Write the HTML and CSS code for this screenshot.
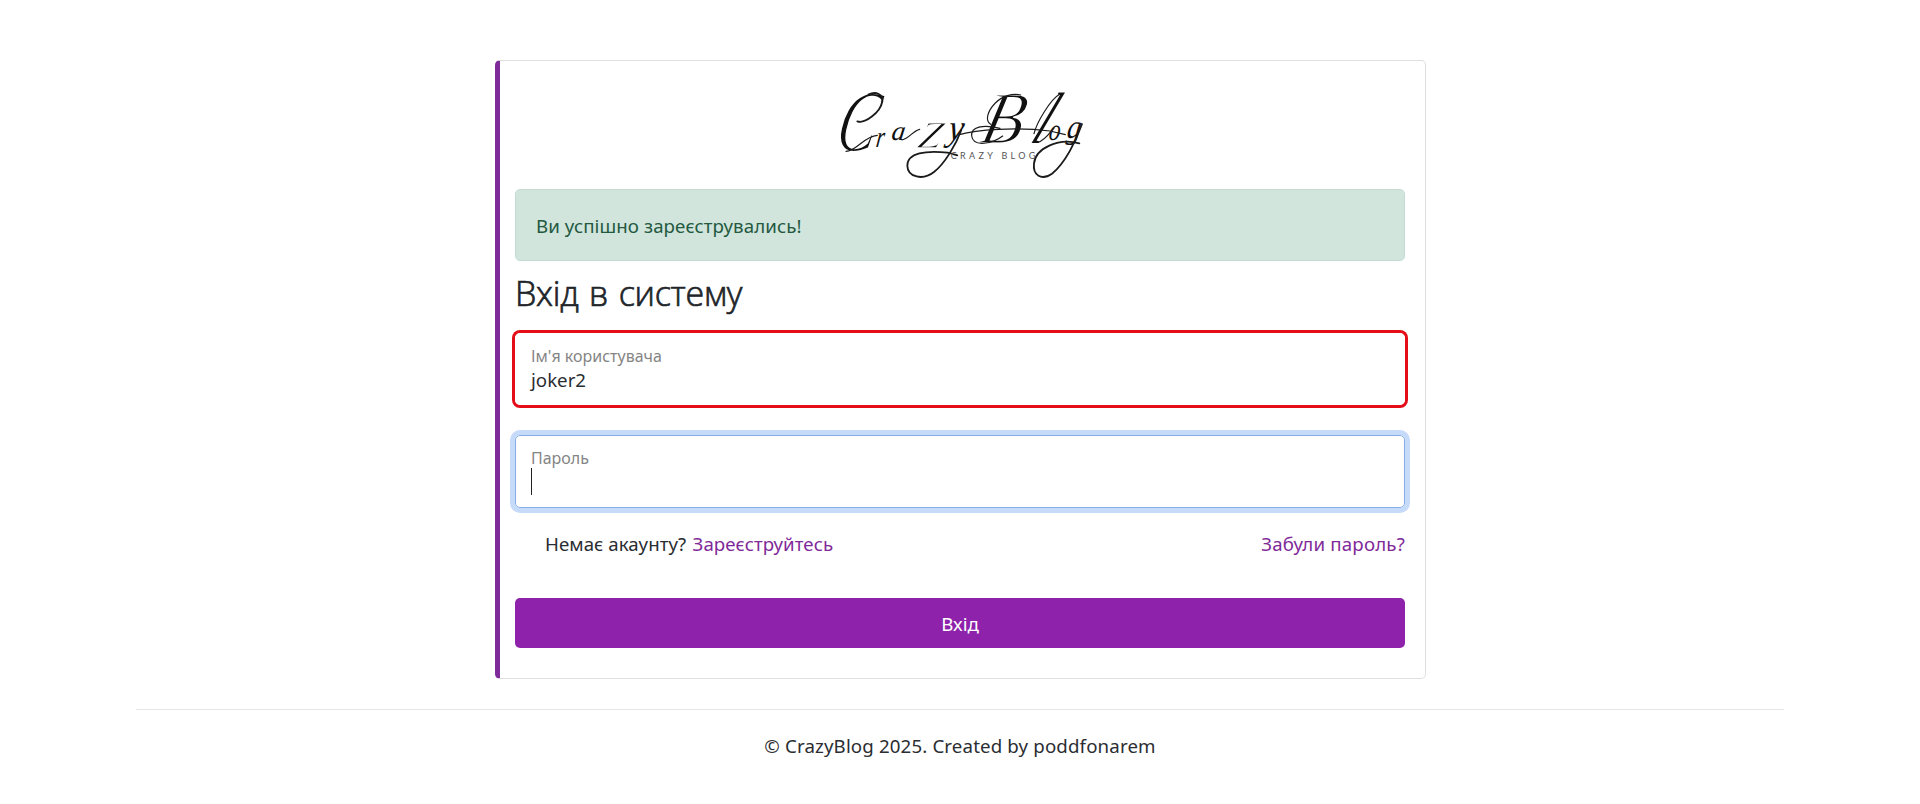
FILE: index.html
```html
<!DOCTYPE html>
<html lang="uk">
<head>
<meta charset="utf-8">
<title>CrazyBlog</title>
<link rel="stylesheet" href="styles.css">
</head>
<body>
<main class="card">
  <svg class="logo" viewBox="0 0 840 327" role="img" aria-label="CrazyBlog">
    <g class="script">
      <text class="thin" transform="translate(40 212) skewX(-12) scale(.68 1)" font-size="262">C</text>
      <text transform="translate(166 202) skewX(-8) scale(.7 1)" font-size="90">r</text>
      <text transform="translate(212 179) skewX(-8) scale(1 1)" font-size="82">a</text>
      <text class="thin" transform="translate(290 204) skewX(-14) scale(1.15 1)" font-size="165">z</text>
      <text transform="translate(382 180) skewX(-8) scale(.95 1)" font-size="110">y</text>
      <text class="thin" transform="translate(474 190) skewX(-14) scale(.92 1)" font-size="222">B</text>
      <text transform="translate(628 189) skewX(-26) scale(.6 1)" font-size="218">l</text>
      <text transform="translate(684 180) skewX(-8) scale(.75 1)" font-size="92">o</text>
      <text transform="translate(738 174) skewX(-8) scale(.85 1)" font-size="100">g</text>
    </g>
    <g class="swash">
      <path d="M78 214C110 214 132 168 172 166"/>
      <path class="bold" d="M112 124C134 132 181 98 187 64C190 41 166 33 145 44"/>
      <path d="M246 180C268 176 277 153 299 148"/>
      <path class="bold" d="M424 150C408 194 374 251 342 276C309 302 263 292 262 257C262 218 318 211 383 218C394 220 401 223 412 226"/>
      <path d="M418 164C468 149 590 140 690 153L736 164"/>
      <path d="M540 145C488 132 452 141 455 168C460 203 518 191 548 168"/>
      <path d="M512 133C494 121 503 93 526 69C546 48 578 39 602 45"/>
      <path d="M720 42C692 57 650 127 642 161"/>
      <path d="M654 187C673 182 690 158 702 144"/>
      <path class="bold" d="M786 132C768 183 735 250 696 281C664 303 638 286 642 250C647 205 714 173 778 190"/>
    </g>
    <text class="caption" x="392" y="237" textLength="254">CRAZY BLOG</text>
  </svg>
  <div class="alert"><span class="alert-text">Ви успішно зареєструвались!</span></div>
  <h1 class="title"><span>Вхід в систему</span></h1>
  <form class="form">
    <div class="field field-marked">
      <span class="label label-user">Ім'я користувача</span>
      <span class="value">joker2</span>
    </div>
    <div class="field field-focus">
      <span class="label label-pass">Пароль</span>
      <span class="caret"></span>
    </div>
    <div class="links">
      <span class="signup"><span class="ask">Немає акаунту?</span> <a class="link" href="#">Зареєструйтесь</a></span>
      <a class="link forgot" href="#">Забули пароль?</a>
    </div>
    <button class="submit" type="button">Вхід</button>
  </form>
</main>
<footer class="footer"><span>© CrazyBlog 2025. Created by poddfonarem</span></footer>
</body>
</html>
```
FILE: styles.css
```css
* { box-sizing: border-box; }
body {
  margin: 0;
  padding-top: 60px;
  background: #fff;
  color: #2a2d31;
  font: 18.7px/30px "Noto Sans", "Open Sans", sans-serif;
}
.card {
  display: flex;
  flex-direction: column;
  width: 931px;
  height: 619px;
  margin: 0 auto;
  margin-left: 495px;
  padding: 19px 20px 0 15px;
  border: 1px solid #dfdfdf;
  border-left: 5px solid #7f2a99;
  border-radius: 5px;
}
.logo { width: 280px; height: 109px; align-self: center; flex: none; overflow: visible; }
.script { fill: #111; font-family: "Liberation Serif", serif; font-style: italic; }
.thin { stroke: #fff; stroke-width: 5; }
.swash { fill: none; stroke: #1b1b1b; stroke-width: 3.5; stroke-linecap: round; }
.bold { stroke-width: 5.5; }
.caption { font: 27px Lato, sans-serif; fill: #555; }
.alert {
  height: 72px;
  padding: 21px 20px;
  border: 1px solid #c6dcd3;
  border-radius: 5px;
  background: #d1e5dd;
  color: #24593f;
  letter-spacing: .08px;
}
.title {
  height: 72px;
  margin: 0;
  padding-top: 11px;
  color: #212529;
  font-family: "Open Sans", "Noto Sans", sans-serif;
  font-size: 34px;
  line-height: 42px;
  font-weight: 300;
  -webkit-text-stroke: .7px #212529;
  letter-spacing: -.25px;
  word-spacing: 2px;
}
.form { display: flex; flex-direction: column; }
.field {
  display: flex;
  flex-direction: column;
  height: 73px;
  padding: 11px 15px;
  border: 1px solid #dee2e6;
  border-radius: 5px;
}
.field-marked { height: 72px; border-color: #fff; box-shadow: 0 0 0 3px #e30e18; }
.field-focus { margin-top: 30px; border-color: #86aee6; box-shadow: 0 0 0 5px #c6dafa; }
.label { font-size: 16px; line-height: 22px; color: #858585; }
.value { line-height: 25px; }
.caret { width: 1px; height: 27px; margin-top: -1px; background: #222; }
.links { display: flex; justify-content: space-between; padding: 21px 0 0 30px; letter-spacing: .05px; }
.ask { margin-right: 1.5px; }
.forgot { letter-spacing: .18px; }
.link { color: #7f2a99; text-decoration: none; }
.submit {
  height: 50px;
  margin-top: 39px;
  padding: 2px 0 0;
  border: 0;
  border-radius: 5px;
  background: #8e22ab;
  color: #fff;
  font: inherit;
}
.footer {
  width: 1648px;
  margin: 30px auto 0;
  padding-top: 21px;
  border-top: 1px solid #e6e6e6;
  text-align: center;
  letter-spacing: .14px;
}
```
